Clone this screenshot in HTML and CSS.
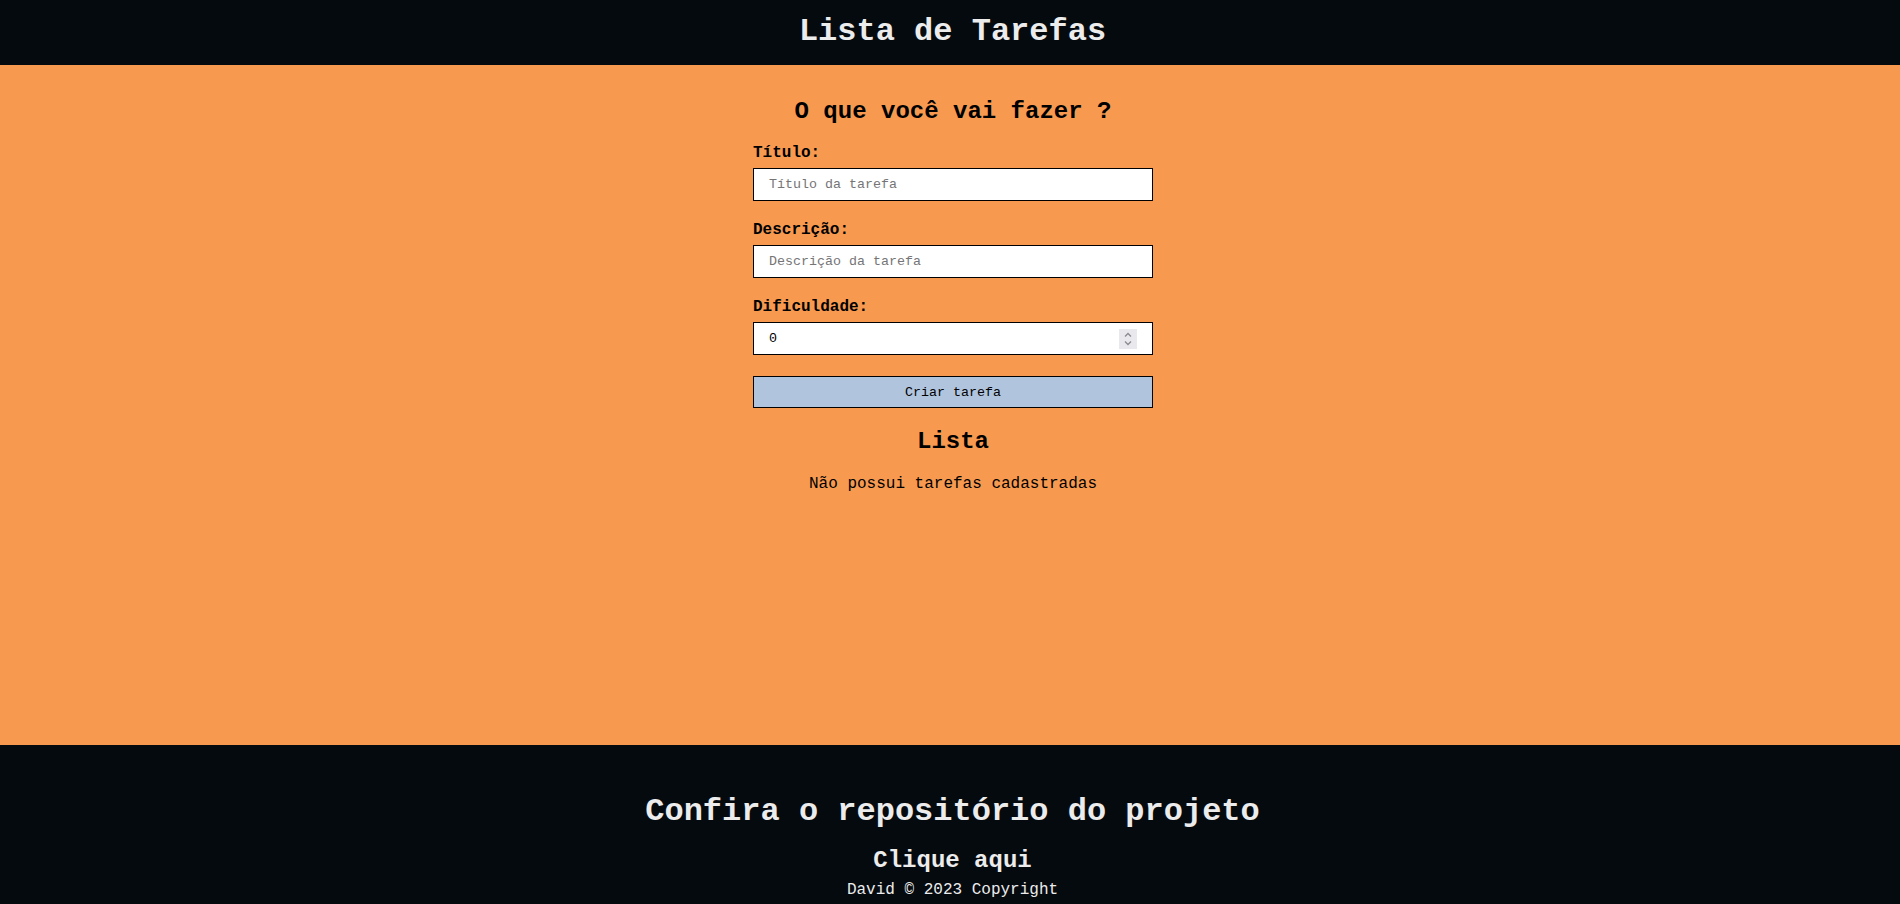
FILE: index.html
```html
<!DOCTYPE html>
<html lang="pt-BR">
<head>
<meta charset="utf-8">
<title>Lista de Tarefas</title>
<link rel="stylesheet" href="styles.css">
</head>
<body>
<div class="page">
  <header class="topbar">
    <h1 class="topbar-title">Lista de Tarefas</h1>
  </header>
  <main class="main">
    <h2 class="section-title">O que você vai fazer ?</h2>
    <form class="task-form">
      <div class="field">
        <label class="field-label" for="title">Título:</label>
        <input class="field-input" id="title" type="text" placeholder="Título da tarefa">
      </div>
      <div class="field">
        <label class="field-label" for="desc">Descrição:</label>
        <input class="field-input" id="desc" type="text" placeholder="Descrição da tarefa">
      </div>
      <div class="field">
        <label class="field-label" for="diff">Dificuldade:</label>
        <div class="number-wrap">
          <input class="field-input number-input" id="diff" type="number" value="0">
          <span class="spin" aria-hidden="true">
            <svg width="18" height="20" viewBox="0 0 18 20">
              <path d="M6 7.5 L9 4.5 L12 7.5" fill="none" stroke="#8a8a90" stroke-width="1.3"/>
              <path d="M6 12.5 L9 15.5 L12 12.5" fill="none" stroke="#8a8a90" stroke-width="1.3"/>
            </svg>
          </span>
        </div>
      </div>
      <button class="submit-btn" type="button">Criar tarefa</button>
    </form>
    <h2 class="list-title">Lista</h2>
    <p class="empty-msg">Não possui tarefas cadastradas</p>
  </main>
  <footer class="footer">
    <h1 class="footer-title">Confira o repositório do projeto</h1>
    <h2 class="footer-link">Clique aqui</h2>
    <p class="footer-copy">David © 2023 Copyright</p>
  </footer>
</div>
</body>
</html>
```

FILE: styles.css
```css
* {
  box-sizing: border-box;
}

html, body {
  margin: 0;
  padding: 0;
}

body {
  font-family: "Liberation Mono", "Courier New", monospace;
  color: #000;
  background: #050a0f;
}

.page {
  display: flex;
  flex-direction: column;
  min-height: 904px;
}

.topbar {
  height: 65px;
  background: #050a0f;
  padding-top: 13px;
  padding-left: 5px;
  text-align: center;
}

.topbar-title {
  margin: 0;
  font-size: 32px;
  font-weight: bold;
  color: #ececec;
  line-height: normal;
}

.main {
  flex: 1;
  background: #f79a50;
  display: flex;
  flex-direction: column;
  align-items: center;
  padding-left: 6px;
}

.section-title {
  margin: 33px 0 19px;
  font-size: 24px;
  font-weight: bold;
  line-height: normal;
}

.task-form {
  width: 400px;
  display: flex;
  flex-direction: column;
}

.field {
  display: flex;
  flex-direction: column;
  gap: 6px;
  margin-bottom: 20px;
}

.field-label {
  font-size: 16px;
  font-weight: bold;
  line-height: normal;
}

.field-input {
  width: 400px;
  height: 33px;
  border: 1px solid #000;
  border-radius: 0;
  padding: 0 15px;
  font-family: "Liberation Mono", "Courier New", monospace;
  font-size: 13.333px;
  color: #000;
  background: #fff;
  outline: none;
}

.field-input::placeholder {
  color: #757575;
}

.number-wrap {
  position: relative;
  width: 400px;
}

.number-input {
  -moz-appearance: textfield;
}

.number-input::-webkit-inner-spin-button,
.number-input::-webkit-outer-spin-button {
  -webkit-appearance: none;
  margin: 0;
}

.spin {
  position: absolute;
  right: 16px;
  top: 7px;
  width: 18px;
  height: 20px;
  background: #e9e9ed;
  display: flex;
}

.submit-btn {
  margin-top: 1px;
  width: 400px;
  height: 32px;
  border: 1px solid #000;
  border-radius: 0;
  background: #b0c4de;
  font-family: "Liberation Mono", "Courier New", monospace;
  font-size: 13.333px;
  color: #000;
  padding: 0;
}

.list-title {
  margin: 20px 0 20px;
  font-size: 24px;
  font-weight: bold;
  line-height: normal;
}

.empty-msg {
  margin: 0;
  font-size: 16px;
  line-height: normal;
}

.footer {
  height: 159px;
  background: #050a0f;
  color: #ececec;
  text-align: center;
  padding-top: 48px;
  padding-left: 5px;
}

.footer-title {
  margin: 0 0 17px;
  font-size: 32px;
  font-weight: bold;
  line-height: normal;
}

.footer-link {
  margin: 0 0 7px;
  font-size: 24px;
  font-weight: bold;
  line-height: normal;
}

.footer-copy {
  margin: 0;
  font-size: 16px;
  font-weight: normal;
  line-height: normal;
}
```
